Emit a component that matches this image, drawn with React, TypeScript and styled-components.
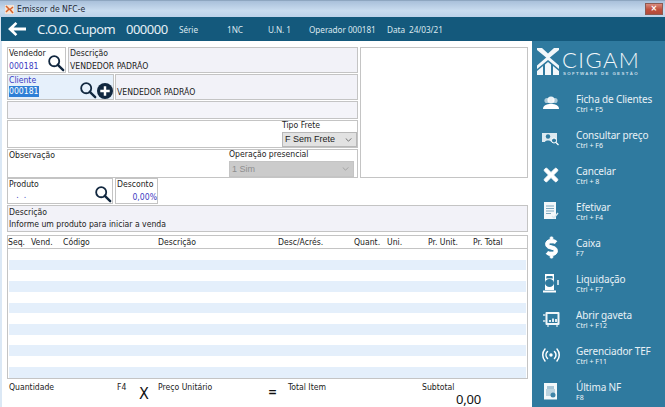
import React from "react";
import styled, { createGlobalStyle } from "styled-components";
import { FaDollarSign, FaTimes } from "react-icons/fa";

const Global = createGlobalStyle`
  html, body { margin: 0; padding: 0; background: #fff; }
  * { box-sizing: border-box; }
  body { font-family: "DejaVu Sans Condensed", "Noto Sans", sans-serif; font-size: 8.6px; color: #222; }
`;

const Window = styled.div`
  width: 665px; height: 407px; overflow: hidden; display: flex; flex-direction: column; background: #fff;
`;
const TitleBar = styled.div`
  height: 17px; flex: none; display: flex; align-items: center; padding: 0 2px 0 5px; gap: 3px;
  background: linear-gradient(#a9c0da, #c9dcef 60%, #bcd2e9);
  border-top: 1px solid #8ea6c0; font-size: 8.6px; color: #1c2733;
`;
const TitleText = styled.span`flex: 1; line-height: 15px;`;
const CloseBtn = styled.div`
  width: 18px; height: 12px; background: linear-gradient(#d98a7c, #c0503d 55%, #b24a3a);
  border: 1px solid #8c5a52; color: #fff; font-size: 9px; font-weight: 700; line-height: 9px; text-align: center;
`;
const Header = styled.div`
  height: 24px; flex: none; background: #14597c; color: #e6f0f6; display: flex; align-items: center; padding-left: 7px;
  border-left: 1px solid #d6e4f2; font-family: "Noto Sans", sans-serif;
`;
const HeaderTitle = styled.span<{ $w: number }>`
  font-size: 13px; letter-spacing: -0.5px; width: ${p => p.$w}px; flex: none; white-space: nowrap;
`;
const HeaderInfo = styled.span<{ $w: number }>`
  font-size: 8.2px; letter-spacing: -0.05px; width: ${p => p.$w}px; flex: none; white-space: nowrap; color: #dbe8ef;
`;
const BackIcon = styled.svg`width: 18px; height: 14px; flex: none; margin-right: 11px;`;

const Main = styled.div`flex: 1; display: flex; min-height: 0;`;
const Content = styled.div`
  width: 532px; flex: none; padding: 6px 4px 0 5px; display: flex; flex-direction: column;
  border-left: 2px solid #dbe8f5;
`;
const TopGrid = styled.div`display: grid; grid-template-columns: 351px 168px; column-gap: 2px; height: 131px;`;
const LeftCol = styled.div`display: flex; flex-direction: column; gap: 1px;`;
const Row = styled.div`display: flex; gap: 2px;`;
const RowTight = styled(Row)`gap: 1px;`;
const Field = styled.div<{ $w?: number; $h: number; $bg?: string; $grow?: boolean }>`
  border: 1px solid #c4c4c4; padding: 0 0 0 1px; display: flex; line-height: 11px; overflow: hidden;
  height: ${p => p.$h}px;
  background: ${p => p.$bg || "#fff"};
  ${p => p.$w ? `width: ${p.$w}px; flex: none;` : ""}
  ${p => p.$grow ? "flex: 1;" : ""}
`;
const FieldText = styled.div`flex: 1; min-width: 0; display: flex; flex-direction: column; justify-content: flex-start; white-space: nowrap;`;
const FieldValue = styled.div<{ $color?: string; $right?: boolean; $top?: number }>`
  color: ${p => p.$color || "#222"}; margin-top: ${p => p.$top ?? 2}px; ${p => p.$right ? "text-align: right;" : ""}
`;
const ClientLabel = styled.div`color: #3b3bc2;`;
const Selected = styled.span`background: #2f7fd6; color: #fff; padding: 0 0 1px;`;
const IconSlot = styled.div`display: flex; align-items: flex-end;`;
const Spacer = styled.div`flex: 1;`;
const SelectGroup = styled.div<{ $w: number; $mr?: number }>`
  width: ${p => p.$w}px; flex: none; display: flex; flex-direction: column; margin: -1px ${p => p.$mr ?? 0}px 0 0;
`;
const SelectBox = styled.div<{ $disabled?: boolean }>`
  height: 16px; display: flex; align-items: center; justify-content: space-between; padding: 0 4px 0 2px; margin-top: 1px;
  background: ${p => p.$disabled ? "#cbcbcb" : "#e2e2e2"};
  color: ${p => p.$disabled ? "#8e8e8e" : "#222"};
  border: 1px solid ${p => p.$disabled ? "#c4c4c4" : "#b8b8b8"};
  font-family: "Liberation Sans", sans-serif; font-size: 9px;
`;
const RightPanel = styled.div`border: 1px solid #c4c4c4; background: #fff;`;
const DescBar = styled.div`
  height: 27px; margin-top: 1px; border: 1px solid #c4c4c4; background: #f2f2f8; padding: 0 1px; line-height: 12px;
`;
const Table = styled.div`margin-top: 3px; height: 144px; display: flex; flex-direction: column;`;
const TableHead = styled.div`
  height: 14px; flex: none; border: 1px solid #c4c4c4; display: grid; line-height: 12px; white-space: nowrap;
  grid-template-columns: 23px 32px 95px 120px 76px 33px 41px 45px 1fr;
`;
const HeadCell = styled.span``;
const TableBody = styled.div`
  height: 130px; border: 1px solid #c4c4c4; border-top: 0; padding: 0 1px; overflow: hidden;
`;
const TableRow = styled.div`height: 10.72px; &:nth-child(even) { background: #e4effb; }`;
const Bottom = styled.div`
  flex: 1; display: grid; grid-template-columns: 108px 22px 19px 110px 20px 134px 1fr; padding: 3px 0 0 2px; line-height: 11px;
`;
const BottomCol = styled.div``;
const Mark = styled.div<{ $size: number; $top: number; $bold?: boolean }>`
  font-size: ${p => p.$size}px; line-height: ${p => p.$size}px; margin-top: ${p => p.$top}px; color: #111;
  font-weight: ${p => p.$bold ? 700 : 400};
`;
const SubTotal = styled.div`font-family: "Noto Sans", sans-serif; font-size: 13px; letter-spacing: -0.2px; line-height: 15px; padding-left: 34px; margin-top: -1px; color: #111;`;

const Sidebar = styled.div`flex: 1; background: #2f7a9f; color: #e8f1f6; padding: 7px 0 0 5px;`;
const Logo = styled.div`display: flex; gap: 3px; height: 37px; align-items: flex-start;`;
const LogoText = styled.div`display: flex; flex-direction: column; padding-top: 3px;`;
const LogoWord = styled.div`
  font-family: "Lato", sans-serif; font-weight: 300; font-size: 22px; line-height: 17px; letter-spacing: 1.4px; color: #f2f7fa;
`;
const LogoSub = styled.div`font-family: "Liberation Sans", sans-serif; font-weight: 700; font-size: 4.4px; letter-spacing: 1.33px; line-height: 6px; color: #c9dee9; margin: 3px 0 0 1px; white-space: nowrap;`;
const Items = styled.div`display: flex; flex-direction: column;`;
const Item = styled.div`height: 36px; display: grid; grid-template-columns: 28px 1fr; column-gap: 11px; align-items: center;`;
const ItemIcon = styled.div`display: flex; justify-content: center; align-items: center; color: #fff; height: 24px;`;
const ItemText = styled.div`display: flex; flex-direction: column; white-space: nowrap;`;
const ItemTitle = styled.div`font-family: "Noto Sans", sans-serif; font-size: 10px; letter-spacing: -0.15px; line-height: 12px; color: #e8f1f6;`;
const ItemKey = styled.div`font-family: "Noto Sans", sans-serif; font-size: 7px; line-height: 9px; color: #f0f6f9;`;

const Search = () => (
  <svg width="18" height="18" viewBox="0 0 20 20" fill="none" stroke="#11273f">
    <circle cx="8" cy="8" r="5.6" strokeWidth="2" />
    <path d="M12 12 L18 18" strokeWidth="2.6" strokeLinecap="round" />
  </svg>
);
const Plus = () => (
  <svg width="16" height="16" viewBox="0 0 17 17">
    <circle cx="8.5" cy="8.5" r="8.5" fill="#11273f" />
    <path d="M8.5 3.5v10M3.5 8.5h10" stroke="#fff" strokeWidth="2.6" />
  </svg>
);
const Chevron = ({ color }: { color: string }) => (
  <svg width="7" height="4" viewBox="0 0 8 5" fill="none" stroke={color}><path d="M.5.5 4 4 7.5.5" /></svg>
);
const AppIcon = () => (
  <svg width="9" height="9" viewBox="0 0 9 9">
    <rect width="9" height="9" fill="#f4e3d4" />
    <path d="M1 1l3 3-3 3M8 2 5 4.5 8 8" stroke="#d9622b" strokeWidth="1.5" fill="none" />
  </svg>
);

const PeopleIcon = () => (
  <svg width="18" height="14" viewBox="0 0 18 14" fill="#fff">
    <circle cx="9" cy="4" r="3.6" opacity=".9" />
    <circle cx="5" cy="4.5" r="2.6" opacity=".6" /><circle cx="13" cy="4.5" r="2.6" opacity=".6" />
    <path d="M1 13c0-3.5 3-5 8-5s8 1.500 8 5z" />
  </svg>
);
const ConsultIcon = () => (
  <svg width="18" height="14" viewBox="0 0 18 14">
    <rect x="0" y="1" width="15" height="9" fill="#dce9f0" />
    <circle cx="6" cy="4.5" r="2.2" fill="#2f7a9f" /><path d="M3 10c0-2 6-2 6 0z" fill="#2f7a9f" />
    <circle cx="12" cy="8.500" r="2.500" fill="#2f7a9f" stroke="#fff" />
    <path d="M14 10.500l2.500 2.500" stroke="#fff" strokeWidth="1.200" />
  </svg>
);
const DocIcon = () => (
  <svg width="15" height="18" viewBox="0 0 15 18">
    <path d="M0 0h12v17H0z" fill="#f3f8fa" />
    <path d="M2 4h8M2 6.500h8M2 9h8M2 11.500h5" stroke="#7fa9bf" strokeWidth="1" />
    <path d="M8 14l2 2 4-5" stroke="#d7e7ef" strokeWidth="1.400" fill="none" />
  </svg>
);
const PumpIcon = () => (
  <svg width="17" height="19" viewBox="0 0 17 19" fill="#fff">
    <path d="M2 0h9v16H2zM3.500 2v2h6V2z" fillRule="evenodd" />
    <ellipse cx="6.500" cy="9" rx="4.500" ry="4" fill="#2f7a9f" />
    <rect x="0" y="16.500" width="13" height="2" />
    <rect x="14" y="6" width="2" height="5" opacity=".7" />
    <rect x="3" y="3" width="7" height="2" fill="#2f7a9f" opacity=".4" />
  </svg>
);
const SafeIcon = () => (
  <svg width="17" height="16" viewBox="0 0 17 16">
    <rect x="2.500" y="1" width="14" height="13" rx="1" fill="#f0f6f9" />
    <rect x="4.500" y="3" width="10" height="9" fill="#2f7a9f" />
    <path d="M6 11h2V9H6zM9 11h2V7.500H9zM12 11h2V8h-2z" fill="#dce9f0" />
    <path d="M0 4h2.500M0 10h2.500" stroke="#dce9f0" strokeWidth="1.500" />
    <path d="M5 14v2M14 14v2" stroke="#dce9f0" strokeWidth="1.200" />
  </svg>
);
const SignalIcon = () => (
  <svg width="18" height="14" viewBox="0 0 18 14" fill="none" stroke="#fff" strokeWidth="1.500" strokeLinecap="round">
    <circle cx="9" cy="7" r="1.700" fill="#fff" stroke="none" />
    <path d="M5.500 3.500c-2 2-2 5 0 7M12.500 3.500c2 2 2 5 0 7M3 1C0 4.500 0 9.500 3 13M15 1c3 3.500 3 8.500 0 12" />
  </svg>
);
const NoteIcon = () => (
  <svg width="14" height="17" viewBox="0 0 14 17">
    <rect width="13" height="16.500" fill="#f3f8fa" />
    <rect x="3" y="3" width="7" height="3" fill="#a9c6d6" />
    <rect x="2" y="6" width="9" height="7" fill="#bcd4e0" />
    <circle cx="9" cy="12" r="2.500" fill="#3f85a8" />
  </svg>
);
const LogoMark = () => (
  <svg width="22" height="27" viewBox="0 0 22 27" fill="#f2f7fa">
    <path d="M0 0h5l6 5.500L17 0h5v2L13.500 9 11 11 8.500 9 0 2z" />
    <path d="M11 8l11 9.500v3.500L11 12 0 21v-3.500z" />
    <path d="M0 23l6-5v9H0zM22 23l-6-5v9h6zM8 16.500l3-2.500 3 2.500V27H8z" />
  </svg>
);
const DollarIcon = styled(FaDollarSign)`stroke: currentColor; stroke-width: 24px; overflow: visible;`;
const CrossIcon = styled(FaTimes)`stroke: currentColor; stroke-width: 20px;`;

const sideItems: { title: string; keys: string; icon: React.ReactNode }[] = [
  { title: "Ficha de Clientes", keys: "Ctrl + F5", icon: <PeopleIcon /> },
  { title: "Consultar preço", keys: "Ctrl + F6", icon: <ConsultIcon /> },
  { title: "Cancelar", keys: "Ctrl + 8", icon: <CrossIcon size={20} /> },
  { title: "Efetivar", keys: "Ctrl + F4", icon: <DocIcon /> },
  { title: "Caixa", keys: "F7", icon: <DollarIcon size={21} /> },
  { title: "Liquidação", keys: "Ctrl + F7", icon: <PumpIcon /> },
  { title: "Abrir gaveta", keys: "Ctrl + F12", icon: <SafeIcon /> },
  { title: "Gerenciador TEF", keys: "Ctrl + F11", icon: <SignalIcon /> },
  { title: "Última NF", keys: "F8", icon: <NoteIcon /> },
];
const heads = ["Seq.", "Vend.", "Código", "Descrição", "Desc/Acrés.", "Quant.", "Uni.", "Pr. Unit.", "Pr. Total"];

export default function App() {
  return (
    <Window>
      <Global />
      <TitleBar>
        <AppIcon />
        <TitleText>Emissor de NFC-e</TitleText>
        <CloseBtn>×</CloseBtn>
      </TitleBar>
      <Header>
        <BackIcon viewBox="0 0 18 14" fill="#fff">
          <path d="M7.500 0l1.800 1.800L5.600 5.500H18v3H5.600l3.700 3.700L7.500 14 0 7z" />
        </BackIcon>
        <HeaderTitle $w={89}>C.O.O. Cupom</HeaderTitle>
        <HeaderTitle $w={53}>000000</HeaderTitle>
        <HeaderInfo $w={48}>Série</HeaderInfo>
        <HeaderInfo $w={41}>1NC</HeaderInfo>
        <HeaderInfo $w={41}>U.N. 1</HeaderInfo>
        <HeaderInfo $w={78}>Operador 000181</HeaderInfo>
        <HeaderInfo $w={60}>Data&nbsp; 24/03/21</HeaderInfo>
      </Header>
      <Main>
        <Content>
          <TopGrid>
            <LeftCol>
              <Row>
                <Field $w={59} $h={26}>
                  <FieldText>Vendedor<FieldValue $color="#3b3bc2">000181</FieldValue></FieldText>
                  <IconSlot><Search /></IconSlot>
                </Field>
                <Field $grow $h={26} $bg="#f2f2f8">
                  <FieldText>Descrição<FieldValue>VENDEDOR PADRÃO</FieldValue></FieldText>
                </Field>
              </Row>
              <RowTight>
                <Field $w={107} $h={26} $bg="#e6f0fb">
                  <FieldText>
                    <ClientLabel>Cliente</ClientLabel>
                    <FieldValue $top={0}><Selected>000181</Selected></FieldValue>
                  </FieldText>
                  <IconSlot><Search /><Plus /></IconSlot>
                </Field>
                <Field $grow $h={26} $bg="#f2f2f8">
                  <FieldText><FieldValue $top={12}>VENDEDOR PADRÃO</FieldValue></FieldText>
                </Field>
              </RowTight>
              <Field $h={18} $bg="#f4f4f9" />
              <Field $h={28}>
                <Spacer />
                <SelectGroup $w={75}>
                  Tipo Frete
                  <SelectBox>F Sem Frete <Chevron color="#555" /></SelectBox>
                </SelectGroup>
              </Field>
              <Field $h={29}>
                <FieldText>Observação</FieldText>
                <SelectGroup $w={125} $mr={3}>
                  Operação presencial
                  <SelectBox $disabled>1 Sim <Chevron color="#999" /></SelectBox>
                </SelectGroup>
              </Field>
            </LeftCol>
            <RightPanel />
          </TopGrid>
          <Row>
            <Field $w={106} $h={26}>
              <FieldText>Produto<FieldValue $top={0} $color="#3b3bc2">&nbsp;&nbsp;&nbsp;.&nbsp;&nbsp;.</FieldValue></FieldText>
              <IconSlot><Search /></IconSlot>
            </Field>
            <Field $w={43} $h={26}>
              <FieldText>Desconto<FieldValue $color="#3b3bc2" $right>0,00%</FieldValue></FieldText>
            </Field>
          </Row>
          <DescBar>Descrição<br />Informe um produto para iniciar a venda</DescBar>
          <Table>
            <TableHead>{heads.map(h => <HeadCell key={h}>{h}</HeadCell>)}</TableHead>
            <TableBody>{Array.from({ length: 12 }, (_, i) => <TableRow key={i} />)}</TableBody>
          </Table>
          <Bottom>
            <BottomCol>Quantidade</BottomCol>
            <BottomCol>F4</BottomCol>
            <BottomCol><Mark $size={16} $top={4}>X</Mark></BottomCol>
            <BottomCol>Preço Unitário</BottomCol>
            <BottomCol><Mark $size={12} $top={4} $bold>=</Mark></BottomCol>
            <BottomCol>Total Item</BottomCol>
            <BottomCol>Subtotal<SubTotal>0,00</SubTotal></BottomCol>
          </Bottom>
        </Content>
        <Sidebar>
          <Logo>
            <LogoMark />
            <LogoText>
              <LogoWord>CIGAM</LogoWord>
              <LogoSub>SOFTWARE DE GESTÃO</LogoSub>
            </LogoText>
          </Logo>
          <Items>
            {sideItems.map(it => (
              <Item key={it.title}>
                <ItemIcon>{it.icon}</ItemIcon>
                <ItemText><ItemTitle>{it.title}</ItemTitle><ItemKey>{it.keys}</ItemKey></ItemText>
              </Item>
            ))}
          </Items>
        </Sidebar>
      </Main>
    </Window>
  );
}
